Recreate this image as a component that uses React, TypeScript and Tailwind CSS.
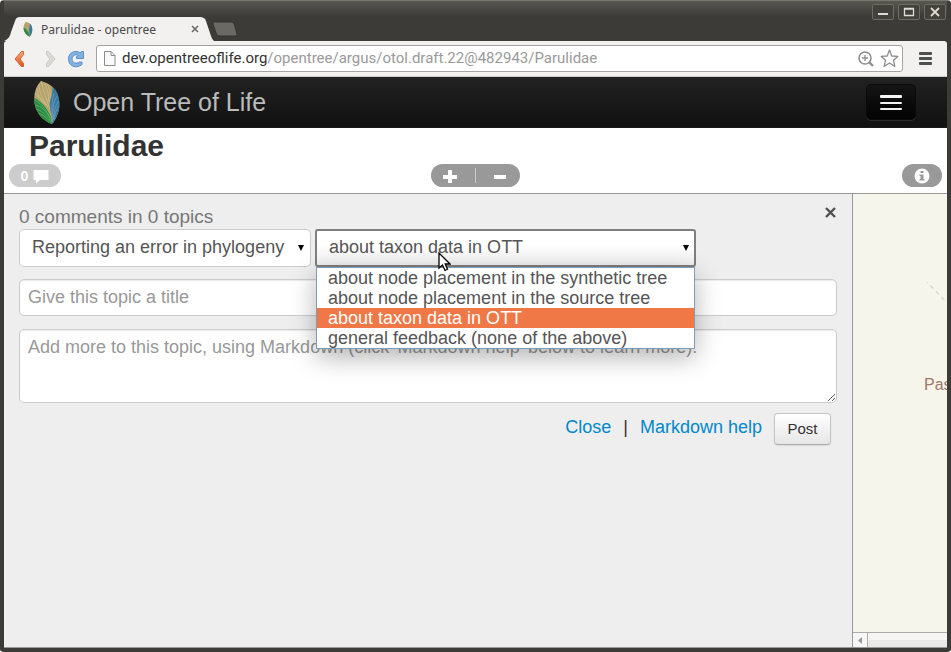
import React from "react";

const kinds = ["Reporting an error in phylogeny", "Asking a question", "Making a comment"];

const targets = [
  "about node placement in the synthetic tree",
  "about node placement in the source tree",
  "about taxon data in OTT",
  "general feedback (none of the above)",
];

const current = "about taxon data in OTT";

function Leaf({ className, veins }: { className: string; veins: boolean }) {
  return (
    <svg className={className} viewBox="0 0 28 46" aria-hidden="true">
      <path d="M8 2C16 4 23 9 25 17C28 27 26 36 19 45C10 42 3 34 1.500 24C0.500 14 3 7 8 2Z" fill="#b5a36c" />
      <path d="M1.300 19C8 22 14 29 18 38L19 45C10 42 3 34 1.500 24Z" fill="#2a8c42" />
      <path d="M19.500 8C23 11 25 14 26 20C27.500 29 25 37 19.500 45C20 39 18 34 17 29C16 21 20 16 19.500 8Z" fill="#3a7aa0" />
      {veins && (
        <g fill="none" strokeWidth="0.6">
          <path
            stroke="#d6c99a"
            d="M8 2C10 10 13 20 17 30M6 5C6 12 9 20 15 28M4 9C4 15 7 20 13 26M2 14C5 18 8 21 12 24M11 4C14 9 16 15 16 23M14 5C17 10 18 15 17 19"
          />
          <path
            stroke="#6dbb7b"
            d="M2 21C9 25 15 33 19 43M2 26C8 27 13 32 17 39M3 30C8 31 13 36 17 41M6 35C10 35 14 40 18 43"
          />
          <path
            stroke="#7aaac6"
            d="M19.500 43C19 34 18 24 21 14M20.500 40C19 32 20 24 24 17M21 41C20 34 22 28 25.500 22M21.500 41C21.500 36 23 31 26 27"
          />
        </g>
      )}
    </svg>
  );
}

function Caret() {
  return (
    <svg
      className="pointer-events-none absolute top-1/2 right-[7px] h-[6px] w-[6px] -translate-y-1/2"
      viewBox="0 0 6 6"
      aria-hidden="true"
    >
      <path d="M0 0H6L3 6Z" fill="#000" />
    </svg>
  );
}

function TitleBar() {
  const control =
    "flex h-4 w-[22px] items-center justify-center rounded-[2px] border border-[#6d6c65] bg-[#42413c] text-[#dfdbd2]";
  return (
    <div className="flex h-[41px] items-start bg-linear-to-b from-[#5a5952] from-0% to-[#3c3b37] to-40%">
      <div className="relative mt-[17px] flex h-6 w-[210px] shrink-0 items-center pl-[18px]">
        <svg className="absolute inset-0 h-full w-full" viewBox="0 0 210 24" aria-hidden="true">
          <path d="M0 24C5 22 6 19 7 15L11 4C12 1 13 0 16 0H196C199 0 201 1 202 4L207 19C208 22 209 23 210 24Z" fill="#f2f1f0" />
        </svg>
        <Leaf className="relative h-4 w-3" veins={false} />
        <span className="relative ml-[7px] flex-1 pt-px text-xs whitespace-nowrap text-[#4a4a4a]">Parulidae - opentree</span>
        <button type="button" aria-label="Close tab" className="relative mr-[15px]">
          <svg className="h-2 w-2" viewBox="0 0 8 8">
            <path d="M1 1L7 7M7 1L1 7" stroke="#6a6a6a" strokeWidth="1.6" />
          </svg>
        </button>
      </div>
      <button type="button" aria-label="New tab" className="mt-[21px] -ml-0.5">
        <svg className="h-4 w-[26px]" viewBox="0 0 26 16">
          <path d="M2 1H19C21 1 22 2 22.500 4L25 13C25 14 25 15 23 15H8C6 15 5 14 4 12L1 3C1 2 1 1 2 1Z" fill="#6a6964" stroke="#33322e" />
        </svg>
      </button>
      <div className="mt-1 mr-px ml-auto flex gap-1">
        <button type="button" aria-label="Minimize" className={control}>
          <svg className="h-3 w-3" viewBox="0 0 12 12">
            <path d="M1 8H11" stroke="currentColor" strokeWidth="2" />
          </svg>
        </button>
        <button type="button" aria-label="Maximize" className={control}>
          <svg className="h-3 w-3" viewBox="0 0 12 12">
            <path d="M1.500 2.500H10.500V9.500H1.500ZM1.500 3.200H10.500" fill="none" stroke="currentColor" strokeWidth="1.300" />
          </svg>
        </button>
        <button type="button" aria-label="Close window" className={control}>
          <svg className="h-3 w-3" viewBox="0 0 12 12">
            <path d="M2 2L10 10M10 2L2 10" stroke="currentColor" strokeWidth="1.800" />
          </svg>
        </button>
      </div>
    </div>
  );
}

function Toolbar() {
  return (
    <div className="flex h-9 items-center rounded-t-[3px] border-b border-[#c9cdcd] bg-[#f2f1f0] pl-[9px]">
      <button type="button" aria-label="Back">
        <svg className="h-[18px] w-[14px]" viewBox="0 0 14 18">
          <defs>
            <linearGradient id="back" x1="0" y1="0" x2="0" y2="1">
              <stop offset="0" stopColor="#f6b078" />
              <stop offset="1" stopColor="#e4501c" />
            </linearGradient>
          </defs>
          <path
            d="M8.500 1.500L2 9L8.500 16.500H10.500V13.500L7 9L10.500 4.500V1.500Z"
            fill="url(#back)"
            stroke="#d45f2c"
            strokeLinejoin="round"
          />
        </svg>
      </button>
      <button type="button" aria-label="Forward" className="ml-4">
        <svg className="h-[18px] w-[14px]" viewBox="0 0 14 18">
          <path
            d="M5.500 1.500L12 9L5.500 16.500H3.500V13.500L7 9L3.500 4.500V1.500Z"
            fill="#dddbd8"
            stroke="#cbc9c6"
            strokeLinejoin="round"
          />
        </svg>
      </button>
      <button type="button" aria-label="Reload" className="ml-2.5">
        <svg className="h-[18px] w-[18px]" viewBox="0 0 18 18">
          <path
            d="M16.500 1.500V8.500H9.500V6.500L11.500 5.500C8.500 3.500 5 6 5 9C5 12.500 9 14.500 12.500 12H15V14.500C9 19.500 1.500 16 1.500 9C1.500 2 9 -0.500 13.500 3L14.500 1.500Z"
            fill="#83b2e0"
            stroke="#5990cb"
            strokeLinejoin="round"
          />
        </svg>
      </button>
      <div className="ml-[11px] flex h-[27px] flex-1 items-center rounded-[3px] border border-[#a5a3a0] bg-white pr-[3px] pl-1.5">
        <svg className="h-[17px] w-[13px] shrink-0" viewBox="0 0 13 17" aria-hidden="true">
          <path d="M1.500 1.500H8L12 5.500V15.500H1.500ZM8 1.500V5.500H12" fill="#fafafa" stroke="#8c8c8c" />
        </svg>
        <a
          href="#page"
          className="ml-1.5 flex-1 font-[Roboto,'Noto_Sans',sans-serif] text-[15px] whitespace-nowrap text-[#9a9a9a]"
        >
          <span className="text-[#333]">dev.opentreeoflife.org</span>/opentree/argus/otol.draft.22@482943/Parulidae
        </a>
        <button type="button" aria-label="Zoom">
          <svg className="h-4 w-4" viewBox="0 0 16 16">
            <path d="M11 11L15 15" stroke="#8f8f8f" strokeWidth="2.400" />
            <circle cx="7" cy="7" r="6" fill="none" stroke="#8f8f8f" strokeWidth="1.600" />
            <path d="M4 7H10M7 4V10" stroke="#8f8f8f" strokeWidth="1.300" />
          </svg>
        </button>
        <button type="button" aria-label="Bookmark this page" className="ml-1.5">
          <svg className="h-[19px] w-[19px]" viewBox="0 0 19 19">
            <path
              d="M9.500 1L11.800 7L17.800 7.400L13.500 11.200L14.800 17.500L9.500 14L4.200 17.500L5.500 11.200L1.200 7.400L7.200 7Z"
              fill="#fff"
              stroke="#8c8c8c"
              strokeWidth="1.300"
              strokeLinejoin="round"
            />
          </svg>
        </button>
      </div>
      <button type="button" aria-label="Menu" className="mr-[15px] ml-4 flex flex-col gap-0.5">
        <span className="h-[3px] w-[13px] rounded-[1px] bg-[#4c4f50]" />
        <span className="h-[3px] w-[13px] rounded-[1px] bg-[#4c4f50]" />
        <span className="h-[3px] w-[13px] rounded-[1px] bg-[#4c4f50]" />
      </button>
    </div>
  );
}

function SiteNav() {
  return (
    <nav className="flex h-[51px] items-center border-b border-[#1c1719] bg-linear-to-b from-[#222] to-[#111] pr-[31px] pl-[29px] font-['Liberation_Sans',Arial,sans-serif]">
      <Leaf className="h-[46px] w-7" veins />
      <a href="#home" className="ml-3 text-[25px] leading-8 whitespace-nowrap text-[#bbb]">
        Open Tree of Life
      </a>
      <button
        type="button"
        aria-label="Toggle navigation"
        className="ml-auto flex h-9 w-[50px] flex-col items-center justify-center gap-1 rounded-[5px] border border-[#0a0a0a] bg-linear-to-b from-[#151515] to-[#040404] shadow-[0_1px_0_#2c2c2c]"
      >
        <span className="h-[3px] w-[22px] rounded-[1px] bg-[#f4f4f4]" />
        <span className="h-0.5 w-[22px] rounded-[1px] bg-[#f4f4f4]" />
        <span className="h-0.5 w-[22px] rounded-[1px] bg-[#f4f4f4]" />
      </button>
    </nav>
  );
}

function PageHeader() {
  return (
    <header className="border-b border-[#999] bg-white px-[5px] pb-1.5">
      <h1 className="pl-5 text-[30px] leading-9 font-bold text-[#333]">Parulidae</h1>
      <div className="grid grid-cols-3">
        <button
          type="button"
          aria-label="0 comments"
          className="flex h-[23px] w-[52px] items-center justify-center gap-[5px] rounded-[12px] bg-[#ccc] text-sm font-bold text-white"
        >
          0
          <svg className="h-4 w-4" viewBox="0 0 16 16" aria-hidden="true">
            <path d="M0.500 2H15.500V12H7L3 15.500V12H0.500Z" fill="#fff" />
          </svg>
        </button>
        <div className="flex h-[23px] w-[89px] items-center justify-between justify-self-center rounded-[12px] bg-[#999] px-3">
          <button type="button" aria-label="Zoom in">
            <svg className="h-[14px] w-[14px]" viewBox="0 0 14 14">
              <path d="M0 8H14M7 1V14" stroke="#fff" strokeWidth="4" />
            </svg>
          </button>
          <span className="h-[15px] w-px bg-[#ccc]" />
          <button type="button" aria-label="Zoom out">
            <svg className="h-[14px] w-[14px]" viewBox="0 0 14 14">
              <path d="M0 8H12" stroke="#fff" strokeWidth="4" />
            </svg>
          </button>
        </div>
        <button
          type="button"
          aria-label="Properties"
          className="flex h-[23px] w-10 items-center justify-center justify-self-end rounded-[12px] bg-[#999]"
        >
          <svg className="h-4 w-4" viewBox="0 0 16 16">
            <circle cx="8" cy="8" r="7.500" fill="#fff" />
            <path d="M6.500 3H9.500V5H6.500ZM5.500 6.500H9.500V11H10.500V12.500H5.500V11H6.500V8H5.500Z" fill="#999" />
          </svg>
        </button>
      </div>
    </header>
  );
}

function TopicForm() {
  return (
    <section className="flex-1 border-r border-[#999] bg-[#eee] px-[15px] pt-[11px] text-lg">
      <div className="flex items-start justify-between">
        <h2 className="text-[19px] leading-6 text-[#777]">0 comments in 0 topics</h2>
        <button type="button" aria-label="Close comments" className="mt-0.5 mr-px">
          <svg className="h-[11px] w-[11px]" viewBox="0 0 11 11">
            <path d="M1 1L10 10M10 1L1 10" stroke="#505050" strokeWidth="2.400" />
          </svg>
        </button>
      </div>
      <form onSubmit={(e) => e.preventDefault()}>
        <div className="flex gap-1">
          <div className="relative w-[292px]">
            <select
              aria-label="Kind of feedback"
              defaultValue={kinds[0]}
              className="h-[38px] w-full appearance-none rounded-[5px] border border-[#ccc] bg-white pb-0.5 pl-3 text-lg leading-6 text-[#555]"
            >
              {kinds.map((k) => (
                <option key={k}>{k}</option>
              ))}
            </select>
            <Caret />
          </div>
          <div className="relative w-[381px]">
            <select
              aria-label="Subject of feedback"
              defaultValue={current}
              className="h-[38px] w-full appearance-none rounded-[3px] border-2 border-[#7f7f7f] bg-linear-to-b from-white from-40% to-[#f0f0f0] pb-0.5 pl-3 text-lg leading-6 text-[#555]"
            >
              {targets.map((t) => (
                <option key={t}>{t}</option>
              ))}
            </select>
            <Caret />
            <ul
              role="listbox"
              aria-label="Subjects"
              className="absolute top-full right-px left-px z-10 border border-[#7f9db9] bg-white text-lg leading-5 text-[#555] shadow-[0_8px_24px_rgba(0,0,0,0.3)]"
            >
              {targets.map((t) => (
                <li
                  key={t}
                  role="option"
                  aria-selected={t === current}
                  className="pl-[11px] whitespace-nowrap aria-selected:bg-[#f07746] aria-selected:text-white"
                >
                  {t}
                </li>
              ))}
            </ul>
            <svg className="absolute top-[23px] left-[123px] z-20 h-5 w-[13px]" viewBox="0 0 13 20" aria-hidden="true">
              <path d="M1 1V16L4.500 13L7 18.500L9.500 17.300L7.200 12H12Z" fill="#fff" stroke="#000" strokeWidth="1.300" />
            </svg>
          </div>
        </div>
        <input
          type="text"
          aria-label="Topic title"
          placeholder="Give this topic a title"
          className="mt-3 block h-[37px] w-full rounded-[5px] border border-[#ccc] bg-white px-2 text-lg leading-6 shadow-[inset_0_1px_1px_rgba(0,0,0,0.08)] placeholder:text-[#999]"
        />
        <textarea
          aria-label="Topic text"
          placeholder="Add more to this topic, using Markdown (click 'Markdown help' below to learn more)."
          className="mt-[13px] block h-[74px] w-full resize rounded-[5px] border border-[#ccc] bg-white px-2 py-[5px] text-lg leading-6 shadow-[inset_0_1px_1px_rgba(0,0,0,0.08)] placeholder:text-[#999]"
        />
        <div className="mt-2.5 mr-1.5 flex items-start justify-end leading-7">
          <a href="#close" className="text-[#08c]">
            Close
          </a>
          <span className="mx-3 text-[#333]">|</span>
          <a href="#markdown" className="text-[#08c]">
            Markdown help
          </a>
          <button
            type="submit"
            className="ml-3 h-8 w-[57px] rounded-[4px] border border-[#c5c5c5] border-b-[#aaa] bg-linear-to-b from-white to-[#e6e6e6] text-[15px] text-[#333] shadow-[0_1px_2px_rgba(0,0,0,0.08)]"
          >
            Post
          </button>
        </div>
      </form>
    </section>
  );
}

function TreeView() {
  return (
    <aside className="flex w-[94px] shrink-0 flex-col overflow-hidden bg-[#f5f5eb]">
      <div className="relative flex-1">
        <svg className="absolute top-[88px] right-0 h-6 w-5" viewBox="0 0 20 24" aria-hidden="true">
          <path d="M0 0L20 21" stroke="#e2d5c5" strokeWidth="1.500" strokeDasharray="4 4" strokeDashoffset="3" />
        </svg>
        <span className="absolute top-[182px] left-[71px] text-base leading-[18px] whitespace-nowrap text-[#a07868]">
          Pas
        </span>
      </div>
      <div className="flex h-[15px] border-t border-[#aaa] bg-linear-to-b from-[#f7f5f4] from-50% to-[#ebe9e8] to-50%">
        <button
          type="button"
          aria-label="Scroll left"
          className="flex w-[15px] items-center justify-center rounded-l-[3px] border-r border-[#aaa] bg-[#f7f7f7]"
        >
          <svg className="h-[7px] w-1" viewBox="0 0 4 7">
            <path d="M4 0V7L0 3.500Z" fill="#999" />
          </svg>
        </button>
      </div>
    </aside>
  );
}

export default function App() {
  return (
    <div className="bg-white">
      <div className="flex min-h-screen flex-col overflow-hidden rounded-[4px] border-x-4 border-t border-b-4 border-[#3c3b37] border-t-[#77766f] bg-[#3c3b37] font-['Noto_Sans',sans-serif]">
        <div className="-mt-px">
          <TitleBar />
        </div>
        <Toolbar />
        <SiteNav />
        <div className="flex flex-1 flex-col font-['Liberation_Sans',Arial,sans-serif]">
          <PageHeader />
          <main className="flex flex-1 border-b border-[#999]">
            <TopicForm />
            <TreeView />
          </main>
        </div>
      </div>
    </div>
  );
}
